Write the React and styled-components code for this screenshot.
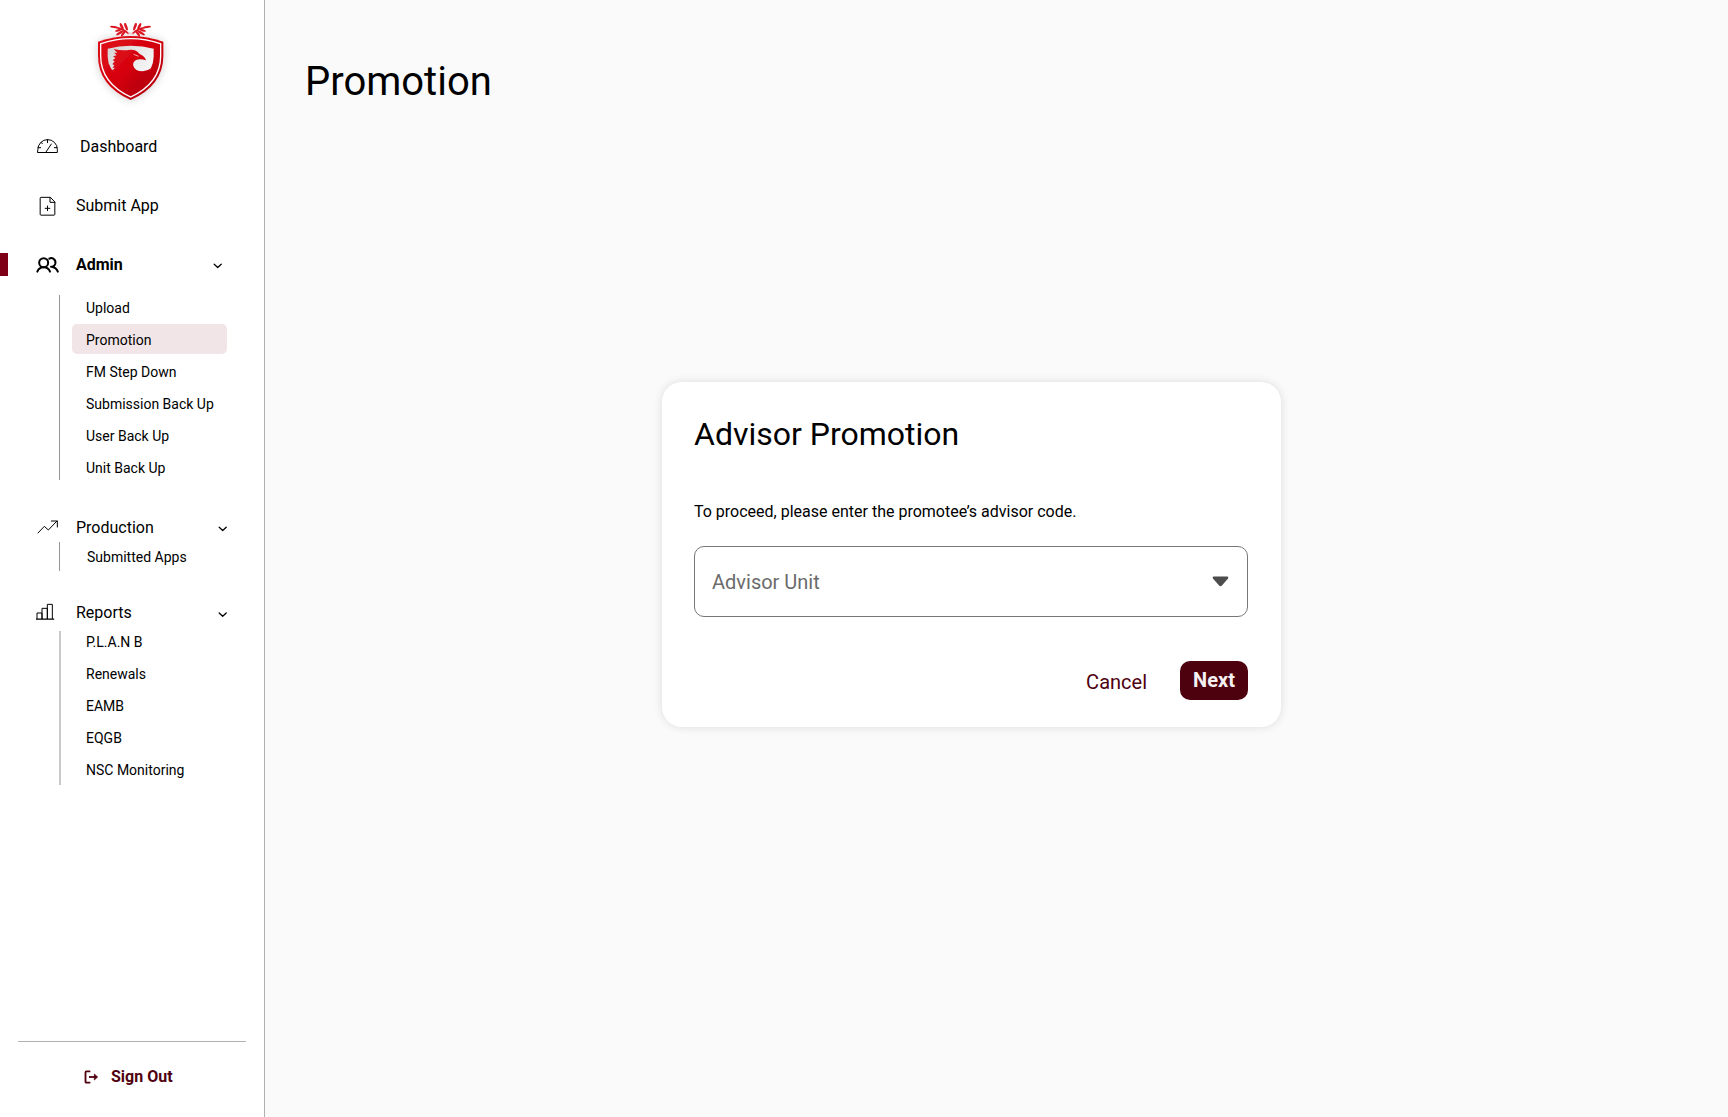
import React from "react";
import styled, { createGlobalStyle } from "styled-components";

const GlobalStyle = createGlobalStyle`
  *, *::before, *::after { box-sizing: border-box; }
  body {
    margin: 0;
    background: #fafafa;
    color: #000;
    font-family: Roboto, "Liberation Sans", sans-serif;
  }
  button { font: inherit; border: 0; padding: 0; background: none; cursor: pointer; }
  svg { display: block; flex: none; }
`;

const Page = styled.div`
  display: flex;
  height: 1117px;
  overflow: hidden;
`;

const Sidebar = styled.aside`
  display: flex;
  flex-direction: column;
  flex: none;
  width: 265px;
  background: #fff;
  border-right: 1px solid #b0b0b0;
`;

const LogoWrap = styled.div`
  padding: 10px 0 0 80px;
  height: 135px;
`;

const NavRow = styled.div`
  display: flex;
  align-items: center;
  height: 24px;
  margin-top: ${(p) => p.$top || 0}px;
  padding-right: ${(p) => p.$right || 35}px;
  font-size: 16px;
  line-height: 24px;
  font-weight: ${(p) => (p.$active ? 700 : 400)};
`;

const Marker = styled.span`
  align-self: flex-start;
  width: 8px;
  height: 23px;
  margin-right: 28px;
  background: ${(p) => (p.$active ? "#7d0017" : "transparent")};
`;

const NavLabel = styled.span`
  flex: 1;
  margin-left: ${(p) => p.$gap || 16}px;
`;

const SubList = styled.ul`
  list-style: none;
  height: ${(p) => p.$height}px;
  margin: ${(p) => p.$top}px 37px 0 59px;
  padding: 0 0 0 ${(p) => 13 - p.$line}px;
  border-left: ${(p) => p.$line}px solid ${(p) => (p.$line > 1 ? "#c9c9c9" : "#959595")};
`;

const SubItem = styled.li`
  height: 30px;
  margin-bottom: 2px;
  padding: 1px 0 0 ${(p) => p.$indent || 14}px;
  border-radius: 5px;
  font-size: 14px;
  line-height: 30px;
  white-space: nowrap;
  background: ${(p) => (p.$selected ? "#f2e5e7" : "transparent")};
  &:first-child { margin-top: ${(p) => p.$shift}px; }
`;

const Footer = styled.div`
  height: 76px;
  margin: auto 18px 0;
  border-top: 1px solid #b0b0b0;
`;

const SignOut = styled.button`
  display: flex;
  align-items: center;
  gap: 12px;
  margin: 23px 0 0 66px;
  color: #50000f;
  font-size: 16px;
  font-weight: 700;
  line-height: 24px;
`;

const Main = styled.main`
  display: flex;
  flex-direction: column;
  flex: 1;
  padding: 58px 0 0 40px;
`;

const Title = styled.h1`
  margin: 0;
  font-size: 40px;
  line-height: 47px;
  font-weight: 400;
`;

const Card = styled.section`
  width: 619px;
  height: 345px;
  margin: 277px 0 0 357px;
  padding: 33px 33px 0 32px;
  background: #fff;
  border-radius: 20px;
  box-shadow: 0 0 10px rgba(0, 0, 0, 0.12);
`;

const CardTitle = styled.h2`
  margin: 0;
  font-size: 32px;
  line-height: 38px;
  font-weight: 400;
`;

const Hint = styled.p`
  margin: 49px 0 0;
  font-size: 16px;
  line-height: 19px;
`;

const Select = styled.div`
  display: flex;
  align-items: center;
  justify-content: space-between;
  height: 71px;
  margin-top: 25px;
  padding: 0 18px 0 17px;
  border: 1px solid #777;
  border-radius: 10px;
  color: #6b6b6b;
  font-size: 20px;
`;

const Actions = styled.div`
  display: flex;
  align-items: center;
  justify-content: flex-end;
  gap: 33px;
  margin-top: 44px;
`;

const Cancel = styled.button`
  padding-top: 2px;
  color: #50000f;
  font-size: 20px;
  line-height: 24px;
`;

const Next = styled.button`
  width: 68px;
  height: 39px;
  border-radius: 10px;
  background: #4d000d;
  color: #f5f0f1;
  font-size: 20px;
  font-weight: 700;
  line-height: 39px;
`;

const IconSvg = styled.svg`
  margin-bottom: ${(p) => (p.$lift || 0) * 2}px;
`;

const Icon = ({ children, weight = 3, lift }) => (
  <IconSvg $lift={lift} width="24" height="24" viewBox="0 0 72 72" fill="none" stroke="currentColor"
    strokeWidth={weight} strokeLinecap="round" strokeLinejoin="round">
    {children}
  </IconSvg>
);

const GaugeIcon = () => (
  <Icon lift={1}>
    <path d="M5.500 55.500H64V46A29 29 0 0 0 5.500 46ZM34.500 17V26M6 41H14M55 41H63M30 54L46 30M15 25L19 29" />
  </Icon>
);

const FileIcon = () => (
  <Icon lift={0.5}>
    <path d="M42 10H15Q12.500 10 12.500 12.500V61Q12.500 63.500 15 63.500H54Q56.500 63.500 56.500 61V25ZM42 10V25H56.500M34.500 36V50M27.500 43H41.500" />
  </Icon>
);

const UsersIcon = () => (
  <Icon weight={6} lift={0.5}>
    <circle cx="23" cy="29" r="13.500" />
    <path d="M4 56Q9 43 23 43T42 56M40 17Q46 13 52 17Q60 22 58 32Q56 39 49 41.500H45M49 42Q61 44 65.500 56" />
  </Icon>
);

const TrendIcon = () => (
  <Icon lift={1}>
    <path d="M6 54L25 34L37 45L63 18M46 18H64V36" />
  </Icon>
);

const BarsIcon = () => (
  <Icon lift={2}>
    <path d="M-1 60.500H53" strokeWidth="4" />
    <path d="M3 59V42H18V59M18 59V28H34V59M34 59V16H49V59" />
  </Icon>
);

const Chevron = ({ drop = 0 }) => (
  <svg width="12" height="12" viewBox="0 0 12 12" fill="none" stroke="currentColor"
    strokeWidth="1.300" strokeLinecap="round" strokeLinejoin="round" overflow="visible">
    <path transform={`translate(0 ${drop})`} d="M2.200 5.300L5.700 8.500L9.200 5.300" />
  </svg>
);

const SignOutIcon = () => (
  <svg width="15" height="14" viewBox="0 0 45 42" fill="none" stroke="currentColor" strokeWidth="5.500">
    <path d="M19 4H7Q4.500 4 4.500 6.500V35Q4.500 38 7 38H19" />
    <path d="M15 21H36" />
    <path d="M31 12L41 21L31 30Z" fill="currentColor" strokeWidth="2" strokeLinejoin="round" />
  </svg>
);

const Caret = () => (
  <svg width="17" height="11" viewBox="0 0 18 11" preserveAspectRatio="none" fill="#4d4d4d">
    <path d="M1.800 .5H16.200Q18 .7 17 2.500L10.500 9.600Q9 11 7.500 9.600L1 2.500Q0 .7 1.800 .5Z" />
  </svg>
);

const Logo = () => (
  <svg width="100" height="100" viewBox="0 0 300 300" overflow="visible">
    <defs>
      <linearGradient id="crest" x1="0" y1="0" x2="1" y2="1">
        <stop offset="0" stopColor="#e0101c" />
        <stop offset="0.500" stopColor="#d4000c" />
        <stop offset="1" stopColor="#a80012" />
      </linearGradient>
      <linearGradient id="field" x1="0" y1="0" x2="1" y2="0.600">
        <stop offset="0" stopColor="#d4d4d4" />
        <stop offset="1" stopColor="#f8f8f8" />
      </linearGradient>
      <filter id="soft" x="-30%" y="-30%" width="160%" height="160%">
        <feDropShadow dx="0" dy="1" stdDeviation="12" floodColor="#000" floodOpacity="0.200" />
      </filter>
    </defs>
    <g filter="url(#soft)">
      <path fill="url(#crest)" d="M54 95Q103 78 152 78T250 95V137Q250 226 152 270Q54 226 54 137Z" />
      <path fill="#fff" d="M60 100Q105 84 152 84T244 100V137Q244 221 152 263Q60 221 60 137Z" />
      <path fill="url(#crest)" d="M64 103Q108 88 152 88T240 103V137Q240 217 152 258.500Q64 217 64 137Z" />
      <path fill="url(#field)" d="M83 116Q116 107 152 107T221 116V140Q220 178 188 205Q152 222 117 201Q84 176 83 140Z" />
      <path fill="url(#crest)" d="M101 117Q128 123 151 119Q169 118 179 132Q195 139 198 151Q181 145 168 150Q157 156 160 168Q165 184 188 184Q202 184 214 174Q194 218 152 240Q112 218 92 181Q102 180 105 173L98 174L103 165L97 163L104 154L98 151L106 144L99 139L110 136L102 128L112 129Z" />
      <path stroke="#fff" strokeWidth="2" d="M161 133L176 139" />
    </g>
    <g fill="#dc1824">
      {[false, true].map((flip) => (
        <g key={String(flip)} transform={flip ? "translate(303 0) scale(-1 1)" : undefined}>
          <ellipse cx="102" cy="51" rx="12" ry="3" transform="rotate(8 102 51)" />
          <ellipse cx="125" cy="49" rx="11" ry="4" transform="rotate(65 125 49)" />
          <ellipse cx="138" cy="50" rx="12" ry="4" transform="rotate(70 138 50)" />
          <ellipse cx="115" cy="61" rx="10" ry="3.600" transform="rotate(-14 115 61)" />
          <ellipse cx="119" cy="69" rx="12" ry="3.700" transform="rotate(-32 119 69)" />
          <ellipse cx="130" cy="70" rx="11" ry="3.700" transform="rotate(-56 130 70)" />
          <path d="M108 50Q132 53 147 69L144 72Q128 59 108 55Z" />
        </g>
      ))}
      <path fill="none" stroke="#eeb4b7" strokeWidth="2" d="M142 75L160 66M161 75L143 66" />
    </g>
  </svg>
);

const ADMIN_LINKS = ["Upload", "Promotion", "FM Step Down", "Submission Back Up", "User Back Up", "Unit Back Up"];
const REPORT_LINKS = ["P.L.A.N B", "Renewals", "EAMB", "EQGB", "NSC Monitoring"];

export default function App() {
  return (
    <>
      <GlobalStyle />
      <Page>
        <Sidebar>
          <LogoWrap><Logo /></LogoWrap>
          <NavRow>
            <Marker /><GaugeIcon /><NavLabel $gap={20}>Dashboard</NavLabel>
          </NavRow>
          <NavRow $top={35}>
            <Marker /><FileIcon /><NavLabel>Submit App</NavLabel>
          </NavRow>
          <NavRow $top={35} $right={40} $active>
            <Marker $active /><UsersIcon /><NavLabel>Admin</NavLabel><Chevron />
          </NavRow>
          <SubList $top={18} $height={185} $line={1}>
            {ADMIN_LINKS.map((name) => (
              <SubItem key={name} $shift={-3} $selected={name === "Promotion"}>{name}</SubItem>
            ))}
          </SubList>
          <NavRow $top={36}>
            <Marker /><TrendIcon /><NavLabel>Production</NavLabel><Chevron />
          </NavRow>
          <SubList $top={2} $height={29} $line={1}>
            <SubItem $shift={-1} $indent={15}>Submitted Apps</SubItem>
          </SubList>
          <NavRow $top={30}>
            <Marker /><BarsIcon /><NavLabel>Reports</NavLabel><Chevron drop={0.7} />
          </NavRow>
          <SubList $top={6} $height={154} $line={2}>
            {REPORT_LINKS.map((name) => (
              <SubItem key={name} $shift={-5}>{name}</SubItem>
            ))}
          </SubList>
          <Footer>
            <SignOut><SignOutIcon />Sign Out</SignOut>
          </Footer>
        </Sidebar>
        <Main>
          <Title>Promotion</Title>
          <Card>
            <CardTitle>Advisor Promotion</CardTitle>
            <Hint>To proceed, please enter the promotee’s advisor code.</Hint>
            <Select>Advisor Unit<Caret /></Select>
            <Actions>
              <Cancel>Cancel</Cancel>
              <Next>Next</Next>
            </Actions>
          </Card>
        </Main>
      </Page>
    </>
  );
}
